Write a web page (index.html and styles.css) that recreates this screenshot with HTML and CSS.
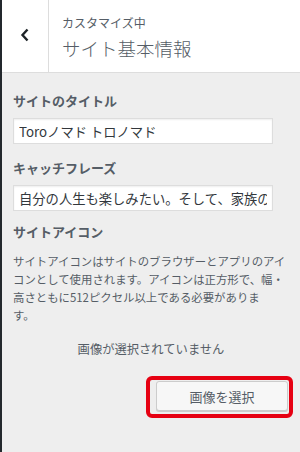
FILE: index.html
```html
<!DOCTYPE html>
<html lang="ja">
<head>
<meta charset="utf-8">
<link rel="stylesheet" href="styles.css">
</head>
<body>
<div class="panel">
  <header class="head">
    <button class="back" aria-label="戻る">
      <svg width="12" height="14" viewBox="0 0 12 14"><polyline points="8.5,1.5 3.5,7 8.5,12.5" fill="none" stroke="#1d2327" stroke-width="2.4"/></svg>
    </button>
    <div class="titles">
      <div class="crumb">カスタマイズ中</div>
      <h1 class="title">サイト基本情報</h1>
    </div>
  </header>
  <main class="content">
    <label class="label">サイトのタイトル</label>
    <input class="field" type="text" value="Toroノマド トロノマド">
    <label class="label">キャッチフレーズ</label>
    <input class="field field-last" type="text" value="自分の人生も楽しみたい。そして、家族の幸せも">
    <div class="label label-last">サイトアイコン</div>
    <p class="desc">サイトアイコンはサイトのブラウザーとアプリのアイ<br>コンとして使用されます。アイコンは正方形で、幅・<br>高さともに512ピクセル以上である必要がありま<br>す。</p>
    <p class="none">画像が選択されていません</p>
    <div class="actions">
      <div class="highlight">
        <button class="btn">画像を選択</button>
      </div>
    </div>
  </main>
</div>
</body>
</html>
```
FILE: styles.css
```css
* { box-sizing: border-box; }
html, body { margin: 0; padding: 0; }
body {
  width: 300px;
  height: 452px;
  overflow: hidden;
  background: #eeeeee;
  font-family: "Noto Sans CJK JP", "Noto Sans", sans-serif;
  color: #555d66;
}
.panel {
  height: 452px;
  border-left: 2px solid #23282d;
  background: #eeeeee;
}
.head {
  display: flex;
  height: 73px;
  background: #fff;
  border-bottom: 1px solid #dddddd;
}
.back {
  width: 47px;
  flex: none;
  border: 0;
  border-right: 1px solid #dddddd;
  background: #fff;
  padding: 0;
  display: flex;
  align-items: center;
  justify-content: center;
}
.back svg { margin-left: -1px; margin-top: -2px; }
.titles {
  padding: 14px 12px 0 13px;
}
.crumb {
  font-size: 12px;
  line-height: 17px;
  color: #555d66;
}
.title {
  margin: 6px 0 0;
  font-size: 18.5px;
  line-height: 22px;
  font-weight: 300;
  color: #555d66;
}
.content {
  padding: 19px 13px 0 11px;
}
.label {
  display: block;
  font-size: 13px;
  line-height: 18px;
  font-weight: 700;
  color: #555d66;
  margin-bottom: 8px;
}
.field {
  display: block;
  width: 260px;
  height: 26px;
  margin: 0 0 15px;
  padding: 0 5px;
  border: 1px solid #dddddd;
  background: #fff;
  box-shadow: inset 0 1px 2px rgba(0,0,0,0.07);
  font-family: "Noto Sans CJK JP", "Noto Sans", sans-serif;
  font-size: 13.3px;
  color: #32373c;
  outline: none;
}
.field-last { margin-bottom: 12px; }
.label-last { margin-bottom: 11px; }
.desc {
  margin: 0;
  font-size: 11.4px;
  line-height: 18px;
  color: #555d66;
  white-space: nowrap;
}
.none {
  margin: 16px 0 0;
  text-align: center;
  font-size: 12.3px;
  line-height: 18px;
  color: #555d66;
  padding-left: 2px;
}
.actions {
  display: flex;
  justify-content: flex-end;
  margin-top: 18px;
  margin-right: -6px;
}
.highlight {
  border: 4px solid #e60012;
  border-radius: 6px;
  padding: 1px 1px 3px 6px;
}
.btn {
  display: block;
  width: 132px;
  height: 30px;
  border: 1px solid #cccccc;
  border-radius: 3px;
  background: #f7f7f7;
  box-shadow: 0 1px 0 #cccccc;
  font-family: "Noto Sans CJK JP", "Noto Sans", sans-serif;
  font-size: 13px;
  color: #555d66;
  padding: 0;
}
```
